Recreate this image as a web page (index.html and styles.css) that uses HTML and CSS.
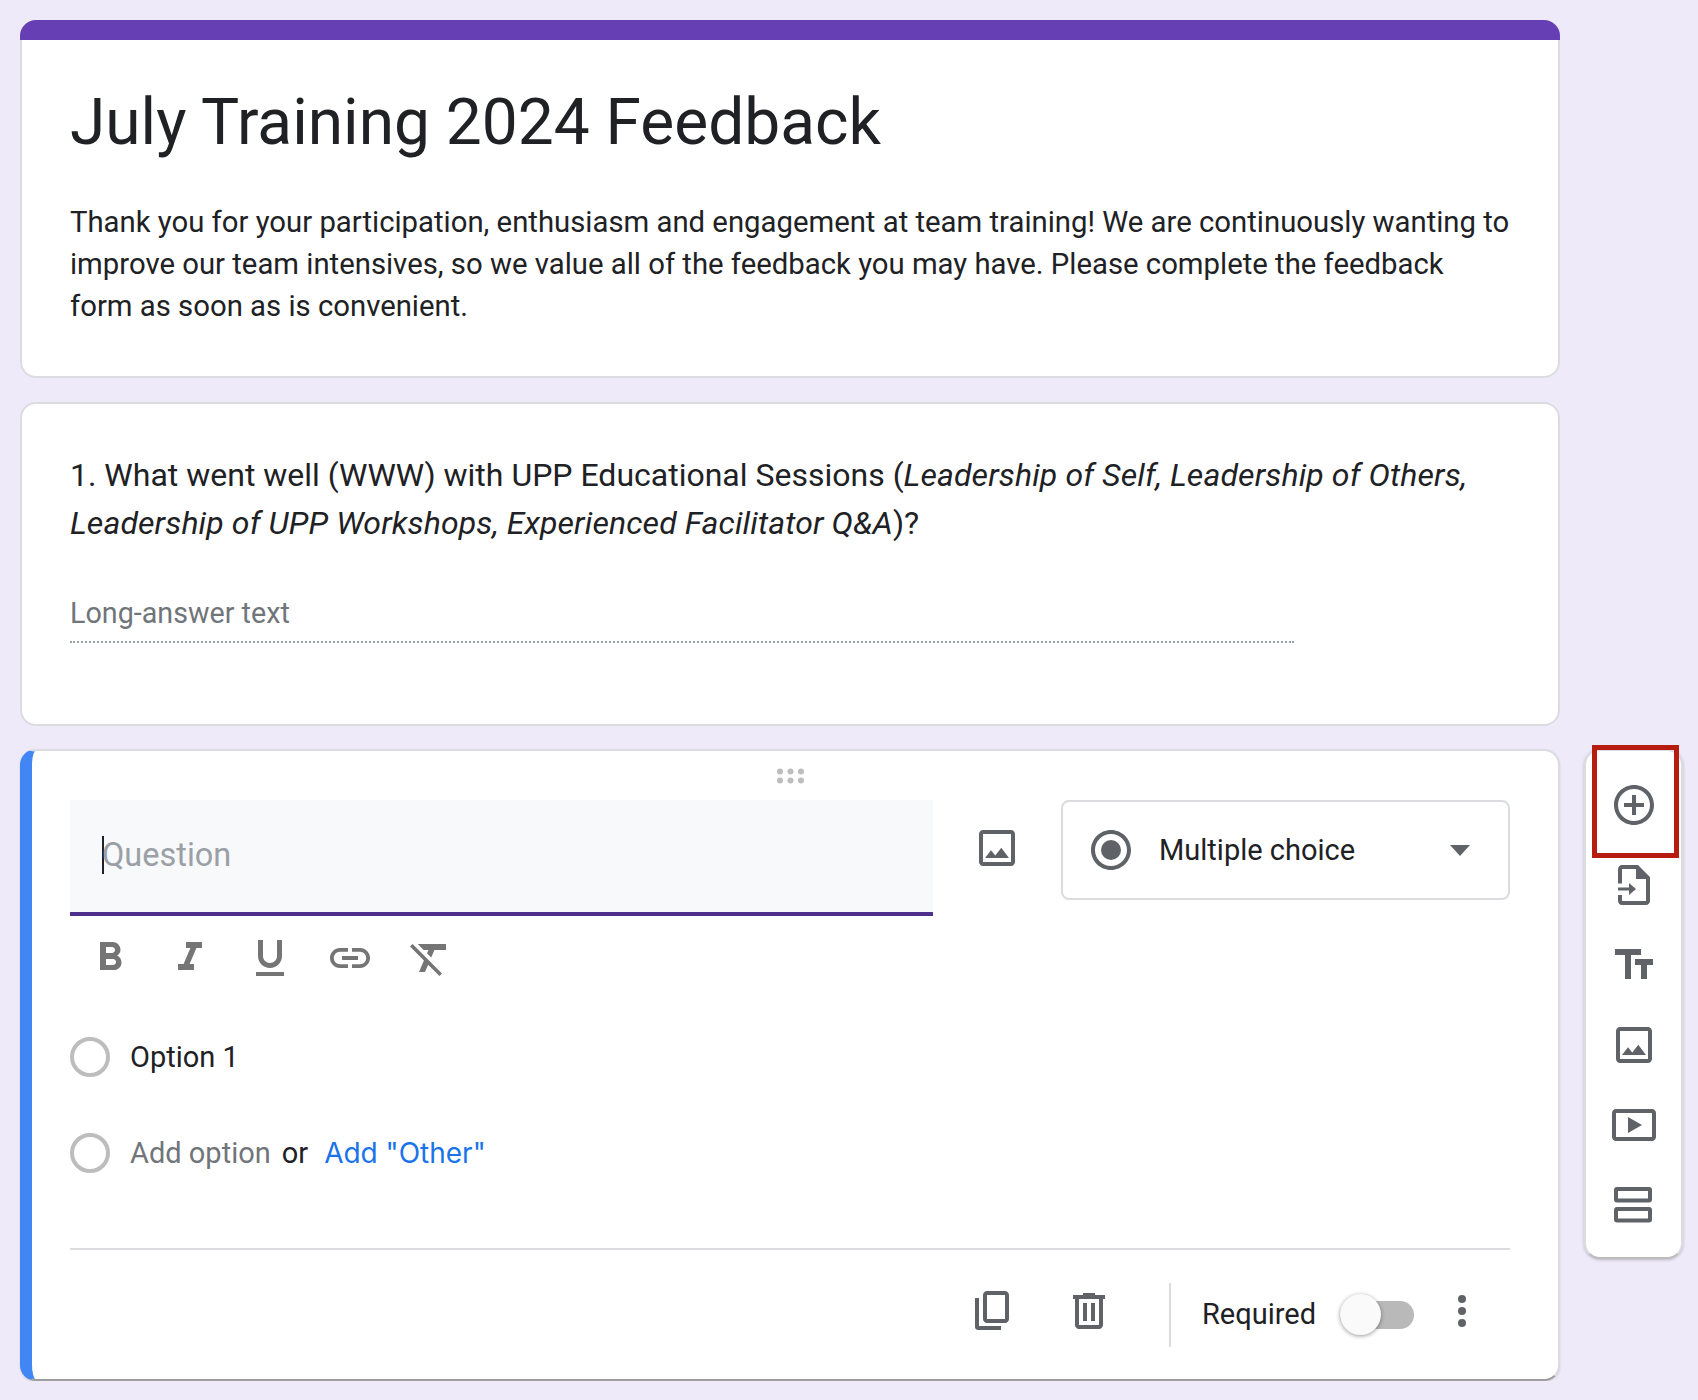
FILE: index.html
```html
<!DOCTYPE html>
<html>

	<head>
		<meta charset="UTF-8">
		<title>July Training 2024 Feedback</title>
		<link rel="stylesheet" href="styles.css">
	</head>

	<body>
		<div class="page">
			<div class="forms">
				<div class="card titleCard">
					<div class="titleBar"></div>
					<div class="titleBody">
						<h1>July Training 2024 Feedback</h1>
						<p>Thank you for your participation, enthusiasm and engagement at team training! We are continuously wanting to improve our team intensives, so we value all of the feedback you may have. Please complete the feedback form as soon as is convenient.</p>
					</div>
				</div>

				<div class="card questionCard">
					<h2>1. What went well (WWW) with UPP Educational Sessions (<em>Leadership of Self, Leadership of Others, Leadership of UPP Workshops, Experienced Facilitator Q&amp;A</em>)?</h2>
					<div class="longAnswer">Long-answer text</div>
				</div>

				<div class="card activeCard">
					<div class="dragHandle">
						<svg width="32" height="16" viewBox="0 0 32 16"><g fill="#bdbdbd"><circle cx="5" cy="3.500" r="3"/><circle cx="15.500" cy="3.500" r="3"/><circle cx="26" cy="3.500" r="3"/><circle cx="5" cy="12.500" r="3"/><circle cx="15.500" cy="12.500" r="3"/><circle cx="26" cy="12.500" r="3"/></g></svg>
					</div>
					<div class="editRow">
						<div class="editLeft">
							<div class="questionInput"><span class="caret"></span><span class="placeholder">Question</span></div>
							<div class="toolbar">
								<svg class="icon" viewBox="0 0 24 24"><path fill="#757575" d="M15.600 10.790c.97-.67 1.650-1.770 1.650-2.790 0-2.260-1.750-4-4-4H7v14h7.040c2.090 0 3.710-1.700 3.710-3.790 0-1.520-.86-2.820-2.150-3.420zM10 6.500h3c.83 0 1.500.67 1.500 1.500s-.67 1.500-1.500 1.500h-3v-3zm3.500 9H10v-3h3.500c.83 0 1.500.67 1.500 1.500s-.67 1.500-1.500 1.500z"/></svg>
								<svg class="icon" viewBox="0 0 24 24"><path fill="#757575" d="M10 4v3h2.210l-3.420 8H6v3h8v-3h-2.210l3.420-8H18V4z"/></svg>
								<svg class="icon" viewBox="0 0 24 24"><path fill="#757575" d="M12 17c3.310 0 6-2.690 6-6V3h-2.500v8c0 1.930-1.570 3.500-3.500 3.500S8.500 12.930 8.500 11V3H6v8c0 3.310 2.690 6 6 6zm-7 2v2h14v-2H5z"/></svg>
								<svg class="icon" viewBox="0 0 24 24"><path fill="#757575" d="M3.900 12c0-1.710 1.390-3.100 3.100-3.100h4V7H7c-2.760 0-5 2.240-5 5s2.240 5 5 5h4v-1.900H7c-1.710 0-3.100-1.390-3.100-3.100zM8 13h8v-2H8v2zm9-6h-4v1.900h4c1.710 0 3.100 1.390 3.100 3.100s-1.390 3.100-3.100 3.100h-4V17h4c2.760 0 5-2.240 5-5s-2.240-5-5-5z"/></svg>
								<svg class="icon" viewBox="0 0 24 24"><path fill="#757575" d="M3.270 5L2 6.270l6.970 6.970L6.500 19h3l1.570-3.660L16.730 21 18 19.730 3.550 5.270 3.270 5zM6 5v.18L8.820 8h2.400l-.72 1.680 2.100 2.100L14.210 8H20V5H6z"/></svg>
							</div>
						</div>
						<svg class="icon imageBtn" viewBox="0 0 24 24"><path fill="#5f6368" d="M19 5v14H5V5h14m0-2H5c-1.100 0-2 .9-2 2v14c0 1.100.9 2 2 2h14c1.100 0 2-.9 2-2V5c0-1.100-.9-2-2-2zM14.140 11.860l-3 3.870L9 13.140 6 17h12l-3.860-5.140z"/></svg>
						<div class="typeSelect">
							<svg class="icon" viewBox="0 0 24 24"><path fill="#5f6368" d="M12 2C6.480 2 2 6.480 2 12s4.480 10 10 10 10-4.480 10-10S17.520 2 12 2zm0 18c-4.420 0-8-3.580-8-8s3.580-8 8-8 8 3.580 8 8-3.580 8-8 8z"/><circle fill="#5f6368" cx="12" cy="12" r="5"/></svg>
							<span class="typeName">Multiple choice</span>
							<span class="typeArrow"></span>
						</div>
					</div>

					<div class="optionRow firstOption">
						<span class="radio"></span>
						<span class="optionText">Option 1</span>
					</div>
					<div class="optionRow">
						<span class="radio"></span>
						<span class="optionText addOption">Add option</span>
						<span class="optionText orText">or</span>
						<span class="optionText addOther">Add "Other"</span>
					</div>

					<div class="cardFoot">
						<svg class="icon footIcon" viewBox="0 0 24 24"><path fill="#5f6368" d="M18.500 2h-9c-1.100 0-2 .9-2 2v12c0 1.100.9 2 2 2h9c1.100 0 2-.9 2-2V4c0-1.100-.9-2-2-2zm0 14h-9V4h9v12zM3.500 5.500v14.500c0 .8.7 1.500 1.500 1.500h11.500v-2h-11V5.500z"/></svg>
						<svg class="icon footIcon trashBtn" viewBox="0 0 24 24"><path fill="#5f6368" d="M15 4V3H9v1H4v2h1v13c0 1.100.9 2 2 2h10c1.100 0 2-.9 2-2V6h1V4h-5zm2 15H7V6h10v13zM9 8h2v9H9zm4 0h2v9h-2z"/></svg>
						<span class="footLine"></span>
						<span class="requiredText">Required</span>
						<span class="toggle"><span class="knob"></span></span>
						<svg class="icon footIcon moreBtn" viewBox="0 0 24 24"><g fill="#5f6368"><circle cx="12" cy="6" r="2"/><circle cx="12" cy="12" r="2"/><circle cx="12" cy="18" r="2"/></g></svg>
					</div>
				</div>
			</div>

			<div class="sideBar">
				<div class="sideMark"></div>
				<svg class="icon" viewBox="0 0 24 24"><path fill="#5f6368" d="M13 7h-2v4H7v2h4v4h2v-4h4v-2h-4V7zm-1-5C6.480 2 2 6.480 2 12s4.480 10 10 10 10-4.480 10-10S17.520 2 12 2zm0 18c-4.410 0-8-3.590-8-8s3.590-8 8-8 8 3.590 8 8-3.590 8-8 8z"/></svg>
				<svg class="icon" viewBox="0 0 24 24"><path fill="#5f6368" d="M14 2H6c-1.100 0-2 .9-2 2v7.200h2V4h7v5h5v11H6v-3h-2v3c0 1.100.9 2 2 2h12c1.100 0 2-.9 2-2V8l-6-6zM4 13.200v1.600h5.500V17l3.500-3-3.500-3v2.200z"/></svg>
				<svg class="icon" viewBox="0 0 24 24"><path fill="#5f6368" d="M2.500 4v3h5v12h3V7h5V4h-13zm19 5h-9v3h3v7h3v-7h3V9z"/></svg>
				<svg class="icon" viewBox="0 0 24 24"><path fill="#5f6368" d="M19 5v14H5V5h14m0-2H5c-1.100 0-2 .9-2 2v14c0 1.100.9 2 2 2h14c1.100 0 2-.9 2-2V5c0-1.100-.9-2-2-2zM14.140 11.860l-3 3.870L9 13.140 6 17h12l-3.860-5.140z"/></svg>
				<svg class="icon" viewBox="0 0 24 24"><path fill="#5f6368" d="M21 4H3c-1.100 0-2 .9-2 2v12c0 1.100.9 2 2 2h18c1.100 0 2-.9 2-2V6c0-1.100-.9-2-2-2zm0 14H3V6h18v12zM9 8v8l7-4z"/></svg>
				<svg class="icon" viewBox="0 0 24 24"><g fill="none" stroke="#5f6368" stroke-width="2"><rect x="3" y="4" width="17" height="5.800" rx=".5"/><rect x="3" y="14" width="17" height="5.800" rx=".5"/></g></svg>
			</div>
		</div>
	</body>

</html>
```

FILE: styles.css
```css
* {
	margin: 0;
	padding: 0;
	box-sizing: border-box;
}

body {
	background: #efeaf9;
	font-family: Roboto, "Liberation Sans", sans-serif;
	color: #202124;
}

.page {
	display: flex;
	align-items: flex-start;
	padding: 20px 15px 0 20px;
}

.forms {
	width: 1540px;
	flex-shrink: 0;
	display: flex;
	flex-direction: column;
	gap: 24px;
}

.icon {
	display: block;
	width: 48px;
	height: 48px;
	flex-shrink: 0;
}

/* cards */
.card {
	background: #fff;
	border: 2px solid #dadce0;
	border-radius: 16px;
}

.titleCard {
	border-top: 0;
	height: 358px;
}

.titleBar {
	height: 20px;
	margin: 0 -2px;
	background: #673fb4;
	border-radius: 16px 16px 0 0;
}

.titleBody {
	padding: 44px 48px 0;
}

.titleBody h1 {
	font-size: 64px;
	line-height: 78px;
	font-weight: 400;
}

.titleBody p {
	width: 1442px;
	margin-top: 39px;
	font-size: 29.3px;
	line-height: 42px;
}

.questionCard {
	height: 324px;
	padding: 47px 48px 0;
}

.questionCard h2 {
	font-size: 32px;
	line-height: 48px;
	font-weight: 400;
}

.questionCard em {
	letter-spacing: .12px;
}

.longAnswer {
	width: 1224px;
	height: 60px;
	margin-top: 36px;
	padding-top: 12px;
	font-size: 28.7px;
	line-height: 36px;
	color: #70757a;
	border-bottom: 2px dotted #9aa0a6;
}

/* active question */
.activeCard {
	position: relative;
	height: 632px;
	margin-top: -1px;
	border-left: 12px solid #4285f4;
	border-bottom-color: #9e9e9e;
	padding: 0 48px 0 38px;
	box-shadow: 0 1px 2px rgba(60, 64, 67, .2);
}

.dragHandle {
	height: 49px;
	display: flex;
	justify-content: center;
	align-items: center;
	padding-left: 2px;
}

.editRow {
	display: flex;
	align-items: flex-start;
}

.editLeft {
	width: 863px;
}

.questionInput {
	height: 116px;
	display: flex;
	align-items: flex-start;
	padding: 36px 0 0 32px;
	background: #f8f9fa;
	border-bottom: 4px solid #4f2f8c;
}

.caret {
	width: 2px;
	height: 38px;
	background: #202124;
}

.placeholder {
	margin-left: -2px;
	font-size: 32.5px;
	line-height: 38px;
	color: #9aa0a6;
}

.toolbar {
	display: flex;
	gap: 32px;
	margin-top: 18px;
	padding-left: 16px;
}

.imageBtn {
	margin: 24px 40px 0 40px;
}

.typeSelect {
	flex: 1;
	height: 100px;
	display: flex;
	align-items: center;
	padding: 0 38px 0 24px;
	border: 2px solid #dadce0;
	border-radius: 8px;
}

.typeName {
	margin-left: 24px;
	font-size: 29px;
	flex: 1;
}

.typeArrow {
	width: 0;
	height: 0;
	border-left: 10px solid transparent;
	border-right: 10px solid transparent;
	border-top: 11px solid #5f6368;
}

.optionRow {
	height: 96px;
	display: flex;
	align-items: center;
}

.firstOption {
	margin-top: 27px;
}

.radio {
	width: 40px;
	height: 40px;
	border: 4px solid #bdbdbd;
	border-radius: 50%;
	margin-right: 20px;
	flex-shrink: 0;
}

.optionText {
	font-size: 29px;
}

.addOption {
	color: #70757a;
}

.orText {
	margin-left: 11px;
}

.addOther {
	margin-left: 16px;
	font-family: Inter, Roboto, sans-serif;
	font-size: 28px;
	color: #1a73e8;
}

.cardFoot {
	height: 132px;
	margin-top: 47px;
	padding-right: 24px;
	display: flex;
	justify-content: flex-end;
	align-items: center;
	border-top: 2px solid #dadce0;
}

.footIcon {
	margin-bottom: 8px;
}

.trashBtn {
	margin-left: 49px;
}

.footLine {
	width: 2px;
	height: 64px;
	margin: 0 31px 0 56px;
	background: #dadce0;
}

.requiredText {
	margin-bottom: 2px;
	font-size: 29px;
}

.toggle {
	position: relative;
	width: 74px;
	height: 28px;
	margin-left: 24px;
	background: #b9b9b9;
	border-radius: 14px;
}

.knob {
	position: absolute;
	left: 0;
	top: -7px;
	width: 41px;
	height: 41px;
	background: #fafafa;
	border-radius: 50%;
	box-shadow: 0 1px 4px rgba(0, 0, 0, .4);
}

.moreBtn {
	margin-left: 24px;
}

/* side tools */
.sideBar {
	position: relative;
	width: 100px;
	height: 510px;
	margin: 729px 0 0 24px;
	padding-top: 30px;
	display: flex;
	flex-direction: column;
	align-items: center;
	gap: 32px;
	background: #fff;
	border: 2px solid #dadce0;
	border-bottom-color: #bdbdbd;
	border-radius: 16px;
	box-shadow: 0 1px 3px rgba(60, 64, 67, .3);
}

.sideMark {
	position: absolute;
	left: 6px;
	top: -6px;
	width: 87px;
	height: 113px;
	border: 5px solid #b71c10;
}
```
